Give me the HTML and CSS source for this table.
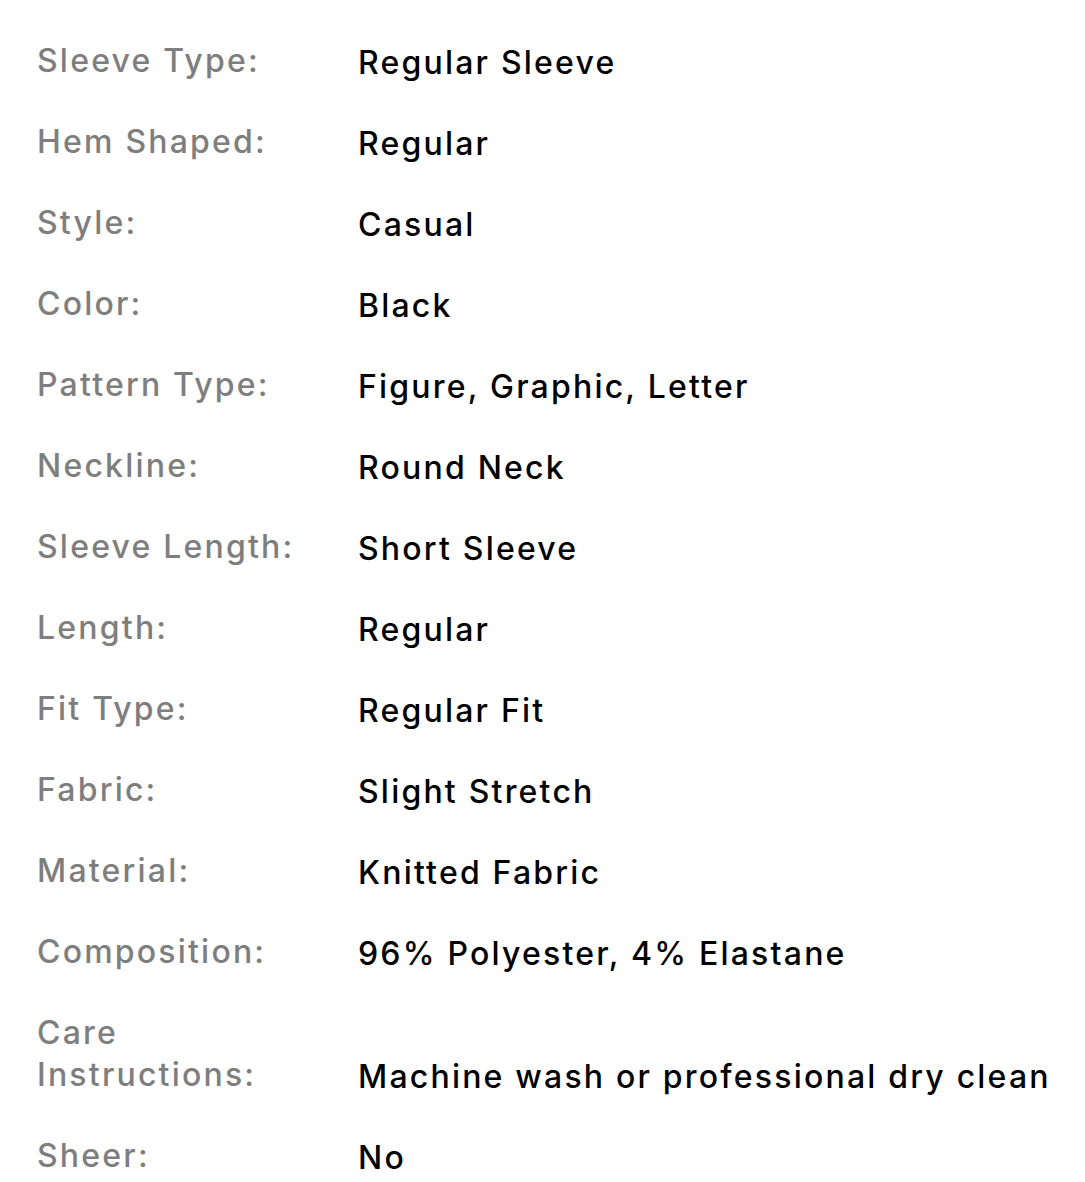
FILE: index.html
```html
<!DOCTYPE html>
<html>
<head>
<meta charset="utf-8">
<link rel="stylesheet" href="styles.css">
</head>
<body>
<div class="specs">
  <div class="row"><div class="label">Sleeve Type:</div><div class="value">Regular Sleeve</div></div>
  <div class="row"><div class="label">Hem Shaped:</div><div class="value">Regular</div></div>
  <div class="row"><div class="label">Style:</div><div class="value">Casual</div></div>
  <div class="row"><div class="label">Color:</div><div class="value">Black</div></div>
  <div class="row"><div class="label">Pattern Type:</div><div class="value">Figure, Graphic, Letter</div></div>
  <div class="row"><div class="label">Neckline:</div><div class="value">Round Neck</div></div>
  <div class="row"><div class="label">Sleeve Length:</div><div class="value">Short Sleeve</div></div>
  <div class="row"><div class="label">Length:</div><div class="value">Regular</div></div>
  <div class="row"><div class="label">Fit Type:</div><div class="value">Regular Fit</div></div>
  <div class="row"><div class="label">Fabric:</div><div class="value">Slight Stretch</div></div>
  <div class="row"><div class="label">Material:</div><div class="value">Knitted Fabric</div></div>
  <div class="row"><div class="label">Composition:</div><div class="value">96% Polyester, 4% Elastane</div></div>
  <div class="row"><div class="label">Care Instructions:</div><div class="value">Machine wash or professional dry clean</div></div>
  <div class="row"><div class="label">Sheer:</div><div class="value">No</div></div>
</div>
</body>
</html>
```
FILE: styles.css
```css
html, body {
  margin: 0;
  padding: 0;
  background: #ffffff;
}
.specs {
  display: flex;
  flex-direction: column;
  gap: 39px;
  padding: 41px 0 0 37px;
  font-family: Inter, "Noto Sans", sans-serif;
  font-size: 32px;
  font-weight: 500;
  line-height: 42px;
  letter-spacing: 2.2px;
}
.row {
  display: grid;
  grid-template-columns: 321px 1fr;
  align-items: end;
}
.label {
  color: #7e7e7e;
  max-width: 300px;
  position: relative;
  top: -1px;
}
.value {
  color: #000000;
  white-space: nowrap;
  position: relative;
  top: 1px;
}
```
